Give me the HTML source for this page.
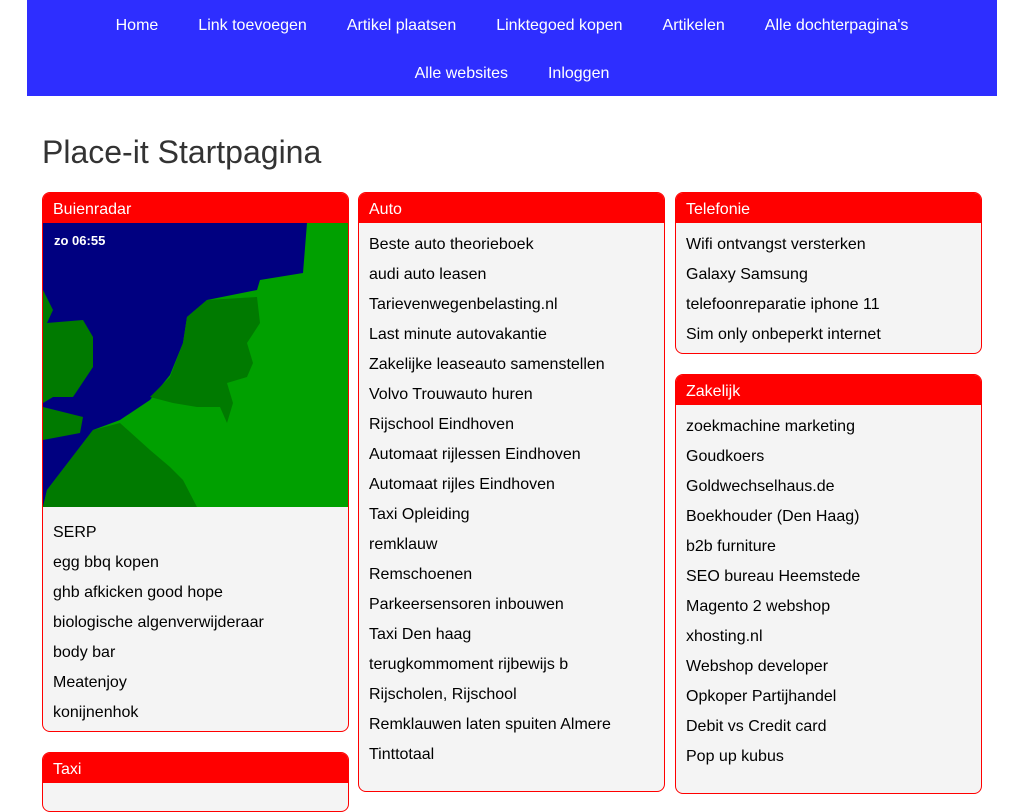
<!DOCTYPE html>
<html><head><meta charset="utf-8"><style>
*{box-sizing:border-box;margin:0;padding:0}
body{width:1024px;height:768px;overflow:hidden;background:#fff;font-family:"Liberation Sans",Arial,sans-serif;color:#000}
nav{position:absolute;left:27px;top:0;width:970px;height:96px;background:#2e2eff;text-align:center;color:#fff;font-size:16px;padding-top:2px}
nav .row{height:48px;line-height:48px}
nav span{margin:0 20px}
h1{position:absolute;left:42px;top:134px;font-size:32px;font-weight:normal;color:#333}
.card{position:absolute;width:307px;border:1px solid #f00;border-radius:8px;background:#f4f4f4;overflow:hidden}
.card .h{background:#f00;color:#fff;height:30px;line-height:30px;padding-left:10px;padding-top:2px;font-size:16px}
.card ul{list-style:none;padding:7px 0 3px}
.card li{height:30px;line-height:30px;padding-left:10px;font-size:16px}
</style></head><body>
<nav><div class="row"><span>Home</span><span>Link toevoegen</span><span>Artikel plaatsen</span><span>Linktegoed kopen</span><span>Artikelen</span><span>Alle dochterpagina's</span></div>
<div class="row"><span>Alle websites</span><span>Inloggen</span></div></nav>
<h1>Place-it Startpagina</h1>

<div class="card" style="left:42px;top:192px;height:540px">
<div class="h">Buienradar</div>
<svg width="305" height="284" viewBox="0 0 305 284" style="display:block">
<rect width="305" height="284" fill="#000080"/>
<polygon points="0,284 4,267 50,207 77,197 107,177 127,152 140,120 144,94 164,77 214,67 217,57 260,50 264,0 305,0 305,284" fill="#00a000"/>
<polygon points="77,200 50,207 4,267 0,284 154,284 140,257 127,244 107,227" fill="#007a00"/>
<polygon points="144,94 164,77 214,74 217,100 204,120 210,140 204,154 184,160 190,180 184,200 177,184 154,184 130,180 107,174 127,154 140,120" fill="#007a00"/>
<polygon points="0,67 10,87 4,100 40,97 50,114 50,144 30,174 10,174 0,180" fill="#007a00"/>
<polygon points="0,184 40,194 37,210 0,217" fill="#007a00"/>
<text x="11" y="22" fill="#fff" font-size="13" font-weight="bold" font-family="Liberation Sans,sans-serif">zo 06:55</text>
</svg>
<ul style="padding:11px 0 0"><li>SERP</li><li>egg bbq kopen</li><li>ghb afkicken good hope</li><li>biologische algenverwijderaar</li><li>body bar</li><li>Meatenjoy</li><li>konijnenhok</li></ul>
</div>
<div class="card" style="left:42px;top:752px;height:60px"><div class="h">Taxi</div></div>

<div class="card" style="left:358px;top:192px;height:600px">
<div class="h">Auto</div>
<ul><li>Beste auto theorieboek</li><li>audi auto leasen</li><li>Tarievenwegenbelasting.nl</li><li>Last minute autovakantie</li><li>Zakelijke leaseauto samenstellen</li><li>Volvo Trouwauto huren</li><li>Rijschool Eindhoven</li><li>Automaat rijlessen Eindhoven</li><li>Automaat rijles Eindhoven</li><li>Taxi Opleiding</li><li>remklauw</li><li>Remschoenen</li><li>Parkeersensoren inbouwen</li><li>Taxi Den haag</li><li>terugkommoment rijbewijs b</li><li>Rijscholen, Rijschool</li><li>Remklauwen laten spuiten Almere</li><li>Tinttotaal</li></ul>
</div>

<div class="card" style="left:675px;top:192px;height:162px">
<div class="h">Telefonie</div>
<ul><li>Wifi ontvangst versterken</li><li>Galaxy Samsung</li><li>telefoonreparatie iphone 11</li><li>Sim only onbeperkt internet</li></ul>
</div>
<div class="card" style="left:675px;top:374px;height:420px">
<div class="h">Zakelijk</div>
<ul><li>zoekmachine marketing</li><li>Goudkoers</li><li>Goldwechselhaus.de</li><li>Boekhouder (Den Haag)</li><li>b2b furniture</li><li>SEO bureau Heemstede</li><li>Magento 2 webshop</li><li>xhosting.nl</li><li>Webshop developer</li><li>Opkoper Partijhandel</li><li>Debit vs Credit card</li><li>Pop up kubus</li></ul>
</div>
</body></html>
